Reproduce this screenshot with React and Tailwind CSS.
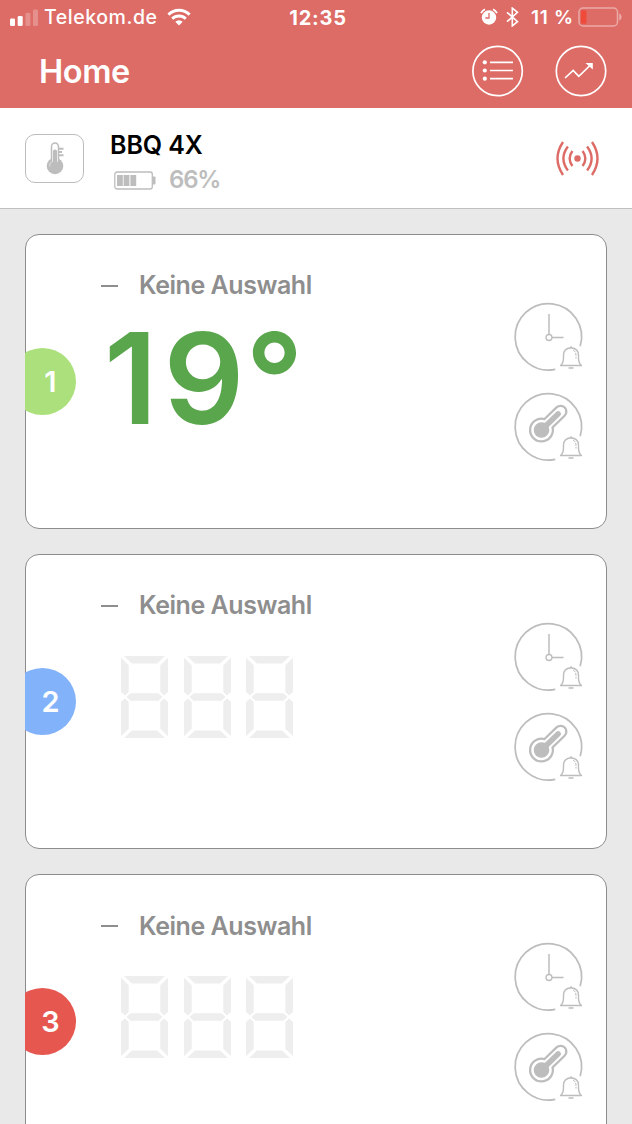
const channels = [
    { id: 1, color: 'bg-[#abe07c]', temperature: '19' },
    { id: 2, color: 'bg-[#82b3fa]', temperature: null },
    { id: 3, color: 'bg-[#e5574f]', temperature: null },
];

function StatusBar() {
    return (
        <div className="flex h-[34px] items-center text-[19px] font-semibold leading-none">
            <div className="flex w-[240px] items-center pl-[10px]">
                <svg width="28" height="17" viewBox="0 0 28 17" fill="#fff">
                    <rect x="0" y="9.5" width="5" height="7.5" rx="1.3" />
                    <rect x="7.7" y="7" width="5" height="10" rx="1.3" />
                    <rect x="15.4" y="3.7" width="5" height="13.3" rx="1.3" opacity="0.25" />
                    <rect x="23" y="0.5" width="5" height="16.5" rx="1.3" opacity="0.25" />
                </svg>
                <span className="mt-px ml-[6px] w-[123px] text-[19.5px] font-medium tracking-[0.55px]">Telekom.de</span>
                <svg width="24" height="18" viewBox="0 0 24 18" className="-mt-px" fill="none" stroke="#fff" strokeWidth="2.9">
                    <path d="M1.4 6.6a15.2 15.2 0 0 1 21.2 0" />
                    <path d="M5.2 10.7a9.8 9.8 0 0 1 13.6 0" />
                    <path d="M12 17.5L8.3 13.8a5.3 5.3 0 0 1 7.4 0z" fill="#fff" stroke="none" />
                </svg>
            </div>
            <div className="mt-px w-[156px] text-center text-[20px] font-bold tracking-[0.8px]">12:35</div>
            <div className="flex flex-1 items-center">
                <svg width="18" height="18" viewBox="0 0 18 18" className="ml-[84px]">
                    <circle cx="9" cy="9.5" r="7.2" fill="#fff" />
                    <path d="M1 5.2A9.5 9.5 0 0 1 5 1.2M17 5.2A9.5 9.5 0 0 0 13 1.2" fill="none" stroke="#fff" strokeWidth="1.8" />
                    <path d="M9 5v5H5.3" fill="none" stroke="#dd6b66" strokeWidth="1.3" />
                </svg>
                <svg width="13" height="20" viewBox="0 0 13 20" className="ml-[8px]" fill="none" stroke="#fff" strokeWidth="1.6">
                    <path d="M1 5.3l10.5 9.4-5.2 4.2V1.1l5.2 4.2L1 14.7" />
                </svg>
                <span className="mt-px ml-[12px] w-[47px] whitespace-nowrap text-[19px] font-semibold tracking-[0.7px]">11 %</span>
                <svg width="45" height="20" viewBox="0 0 45 20">
                    <rect x="1" y="1" width="38.5" height="18" rx="4" fill="none" stroke="#ebaaa7" strokeWidth="1.5" />
                    <rect x="3" y="3.2" width="5.5" height="13.6" rx="1.5" fill="#ef4a3a" />
                    <path d="M41.2 6.5c3.2 1.2 3.2 5.8 0 7z" fill="#ebaaa7" />
                </svg>
            </div>
        </div>
    );
}

function ListButton() {
    return (
        <button type="button">
            <svg width="52" height="52" viewBox="0 0 52 52" fill="none" stroke="#fff">
                <circle cx="25.6" cy="26" r="24.7" strokeWidth="1.7" />
                <path d="M18 17.300H41M18 25.500H41M18 33.700H41" strokeWidth="1.7" />
                <g fill="#fff" stroke="none">
                    <circle cx="12.8" cy="17.300" r="2.1" />
                    <circle cx="12.8" cy="25.500" r="2.1" />
                    <circle cx="12.8" cy="33.700" r="2.1" />
                </g>
            </svg>
        </button>
    );
}

function ChartButton() {
    return (
        <button type="button">
            <svg width="52" height="52" viewBox="0 0 52 52" fill="none" stroke="#fff">
                <circle cx="26" cy="26" r="24.7" strokeWidth="1.7" />
                <path d="M10 33l8.2-7.6 5.6 6L35 20.500" strokeWidth="1.7" />
                <path d="M30.5 18h7.3v6.6z" fill="#fff" stroke="none" />
            </svg>
        </button>
    );
}

function DeviceBar() {
    return (
        <div className="flex h-[101px] shrink-0 items-center border-b border-[#bfbfbf] bg-white">
            <div className="ml-[25px] flex h-[49px] w-[59px] items-center justify-center rounded-[10px] border border-[#bcbcbc]">
                <svg width="18" height="34" viewBox="0 0 18 34" className="shrink-0">
                    <circle cx="9" cy="25" r="8.300" fill="#bdbdbd" />
                    <path d="M5.500 21V5.500a3.500 3.500 0 0 1 7 0V21" fill="#fff" stroke="#bdbdbd" strokeWidth="1.500" />
                    <path d="M9 25V10.500" stroke="#bdbdbd" strokeWidth="4.200" strokeLinecap="round" />
                    <path d="M3.600 25.500a5.500 5.500 0 0 1 1.900-4.600" fill="none" stroke="#e4e4e4" strokeWidth="0.900" />
                    <path d="M13 7.700h4.500M13 11h3M13 14.300h4.500" stroke="#bdbdbd" strokeWidth="1.900" />
                </svg>
            </div>
            <div className="ml-[26px] flex flex-col pt-[10px]">
                <span className="h-[35px] text-[25px] font-semibold leading-[35px] tracking-[-0.1px] text-black">BBQ 4X</span>
                <div className="flex h-[35px] items-center">
                    <svg width="43" height="19" viewBox="0 0 43 19" className="-mt-px ml-[4px]">
                        <rect x="0.8" y="1" width="37.5" height="17" rx="2.2" fill="none" stroke="#bdbdbd" strokeWidth="1.3" />
                        <path d="M3 4h5.8v11H3zM9.6 4h5.8v11H9.6zM16.4 4h5.8v11h-5.8z" fill="#bdbdbd" />
                        <path d="M39 5.5h1.5q1 0 1 1v6q0 1-1 1H39z" fill="#bdbdbd" />
                    </svg>
                    <span className="-mt-px ml-[12px] text-[24px] font-semibold tracking-[-1.2px] text-[#bdbdbd]">66%</span>
                </div>
            </div>
            <svg width="44" height="36" viewBox="0 0 44 36" className="mr-[33px] ml-auto" fill="none" stroke="#dd6b66" strokeWidth="2.4">
                <circle cx="22.5" cy="18.500" r="3.2" fill="#dd6b66" stroke="none" />
                <path d="M17.4 11q-5.500 7.500 0 15M12.900 6.500q-9 12 0 24M8 2q-11 16.500 0 33" />
                <path d="M27.6 11q5.500 7.500 0 15M32.100 6.500q9 12 0 24M37 2q11 16.500 0 33" />
            </svg>
        </div>
    );
}

// Bell sitting in the open corner of the alarm circles
function AlarmBell() {
    return (
        <g>
            <path d="M46.500 62.500q3-2.500 3-7.500v-3q0-6.500 7.500-7.300q7.500 .8 7.500 7.300v3q0 5 3 7.500z" strokeWidth="1.4" strokeLinejoin="round" />
            <path d="M57 44.700v-1.400M54.500 65h5" strokeWidth="1.5" />
            <path d="M59 47q3 1.500 3 5.500v3" strokeWidth="1" strokeDasharray="3 1" />
        </g>
    );
}

function ClockAlarm() {
    return (
        <svg width="68" height="68" viewBox="0 0 68 68" fill="none" stroke="#bdbdbd" className="overflow-visible">
            <path d="M66.200 43.200A33.200 33.200 0 1 0 41.300 66.300" strokeWidth="1.700" />
            <path d="M35 11v20.500M38 34.500h11.500" strokeWidth="1.500" />
            <circle cx="35" cy="34.500" r="3" strokeWidth="1.300" />
            <AlarmBell />
        </svg>
    );
}

function TemperatureAlarm() {
    return (
        <svg width="68" height="68" viewBox="0 0 68 68" fill="none" stroke="#bdbdbd" className="overflow-visible">
            <path d="M66.200 43.200A33.200 33.200 0 1 0 41.300 66.300" strokeWidth="1.700" />
            <g transform="translate(27.500 37) rotate(46)">
                <path d="M-5.800 -9.800V-26.500a5.800 5.800 0 0 1 11.600 0V-9.800A11.400 11.400 0 1 1 -5.800 -9.800z" strokeWidth="2.300" />
                <circle cx="0" cy="0" r="7.800" fill="#bdbdbd" stroke="none" />
                <path d="M0 0V-23" strokeWidth="5.600" strokeLinecap="round" />
            </g>
            <AlarmBell />
        </svg>
    );
}

// Unlit LCD cell, shown when no probe is connected
function EmptyDigit() {
    return (
        <svg width="47" height="82" viewBox="0 0 47 82" fill="#eee">
            <path d="M3 0H44L36 7.500H11z" />
            <path d="M3 82H44L36 74.500H11z" />
            <path d="M5.500 41l4-3.800h28l4 3.800-4 3.800h-28z" />
            <path d="M0 1.800l7.700 7.400V36L4 39.500 0 36z" />
            <path d="M47 1.800l-7.700 7.400V36L43 39.500 47 36z" />
            <path d="M0 80.200l7.700-7.400V46L4 42.500 0 46z" />
            <path d="M47 80.200l-7.700-7.400V46L43 42.500 47 46z" />
        </svg>
    );
}

function ChannelCard({ channel }) {
    return (
        <div className="flex h-[295px] shrink-0 rounded-[14px] border border-[#8c8c8c] bg-white">
            <div className="-ml-px mt-[113px] h-[67px] w-[51px] shrink-0 overflow-hidden">
                <div className={`-ml-[16px] flex h-[67px] w-[67px] items-center justify-center rounded-full pl-[16px] text-[29px] font-semibold text-white ${channel.color}`}>
                    {channel.id}
                </div>
            </div>
            <div className="flex-1 pl-[25px]">
                <div className="mt-[33px] flex h-[36px] items-center">
                    <div className="-mt-px h-[2px] w-[17px] bg-[#8e8e8e]" />
                    <span className="ml-[21px] text-[25px] font-semibold tracking-[-0.45px] text-[#8e8e8e]">Keine Auswahl</span>
                </div>
                {channel.temperature ? (
                    <div className="mt-[11px] ml-[3px] flex h-[127px] text-[126.500px] font-semibold leading-[127px] text-[#5aa64c]">
                        <span className="tracking-[6px]">{channel.temperature}</span>
                        <span className="-ml-[5px]">°</span>
                    </div>
                ) : (
                    <div className="mt-[32px] ml-[20px] flex gap-[15.500px]">
                        <EmptyDigit />
                        <EmptyDigit />
                        <EmptyDigit />
                    </div>
                )}
            </div>
            <div className="mt-[68px] mr-[24.500px] flex flex-col gap-[21.500px]">
                <ClockAlarm />
                <TemperatureAlarm />
            </div>
        </div>
    );
}

export default function App() {
    return (
        <div className="flex h-[1124px] w-[632px] flex-col overflow-hidden bg-[#e9e9e9] font-['Inter','Liberation_Sans',sans-serif]">
            <header className="h-[108px] shrink-0 bg-[#dd6b66] text-white">
                <StatusBar />
                <div className="flex h-[74px] items-center pr-[25px] pl-[39px]">
                    <h1 className="flex-1 pt-[2px] text-[32.500px] font-semibold tracking-[-0.4px]">Home</h1>
                    <div className="flex gap-[31px]">
                        <ListButton />
                        <ChartButton />
                    </div>
                </div>
            </header>
            <DeviceBar />
            <main className="flex flex-col gap-[25.200px] px-[25px] pt-[25px]">
                {channels.map(channel => (
                    <ChannelCard key={channel.id} channel={channel} />
                ))}
            </main>
        </div>
    );
}
